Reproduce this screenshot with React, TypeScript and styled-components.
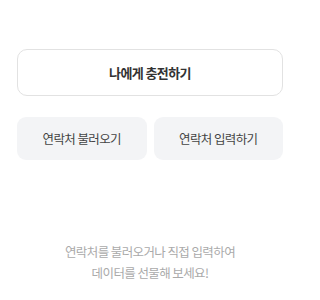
import React from "react";
import styled, { createGlobalStyle } from "styled-components";

const Global = createGlobalStyle`
  html, body { margin: 0; padding: 0; background: #fff; }
  body { font-family: "Noto Sans CJK KR", "Noto Sans", sans-serif; }
`;

const Page = styled.div`
  width: 300px;
  height: 300px;
  box-sizing: border-box;
  padding: 49px 17px 0;
  display: flex;
  flex-direction: column;
`;

const PrimaryButton = styled.button`
  height: 47px;
  border: 1px solid #e2e2e2;
  border-radius: 10px;
  background: #fff;
  color: #333;
  font-family: inherit;
  font-size: 13px;
  font-weight: 700;
  letter-spacing: -0.6px;
  cursor: pointer;
`;

const Row = styled.div`
  margin-top: 21px;
  display: grid;
  grid-template-columns: 1fr 1fr;
  gap: 7px;
`;

const SecondaryButton = styled.button`
  height: 43px;
  border: none;
  border-radius: 9px;
  background: #f3f4f6;
  color: #444;
  font-family: inherit;
  font-size: 12.5px;
  font-weight: 400;
  letter-spacing: -0.6px;
  cursor: pointer;
`;

const Hint = styled.p`
  margin: 81px 0 0;
  text-align: center;
  color: #aaa;
  font-size: 12.5px;
  line-height: 21px;
  letter-spacing: -0.6px;
`;

export default function App() {
  return (
    <>
      <Global />
      <Page>
        <PrimaryButton>나에게 충전하기</PrimaryButton>
        <Row>
          <SecondaryButton>연락처 불러오기</SecondaryButton>
          <SecondaryButton>연락처 입력하기</SecondaryButton>
        </Row>
        <Hint>
          연락처를 불러오거나 직접 입력하여
          <br />
          데이터를 선물해 보세요!
        </Hint>
      </Page>
    </>
  );
}
